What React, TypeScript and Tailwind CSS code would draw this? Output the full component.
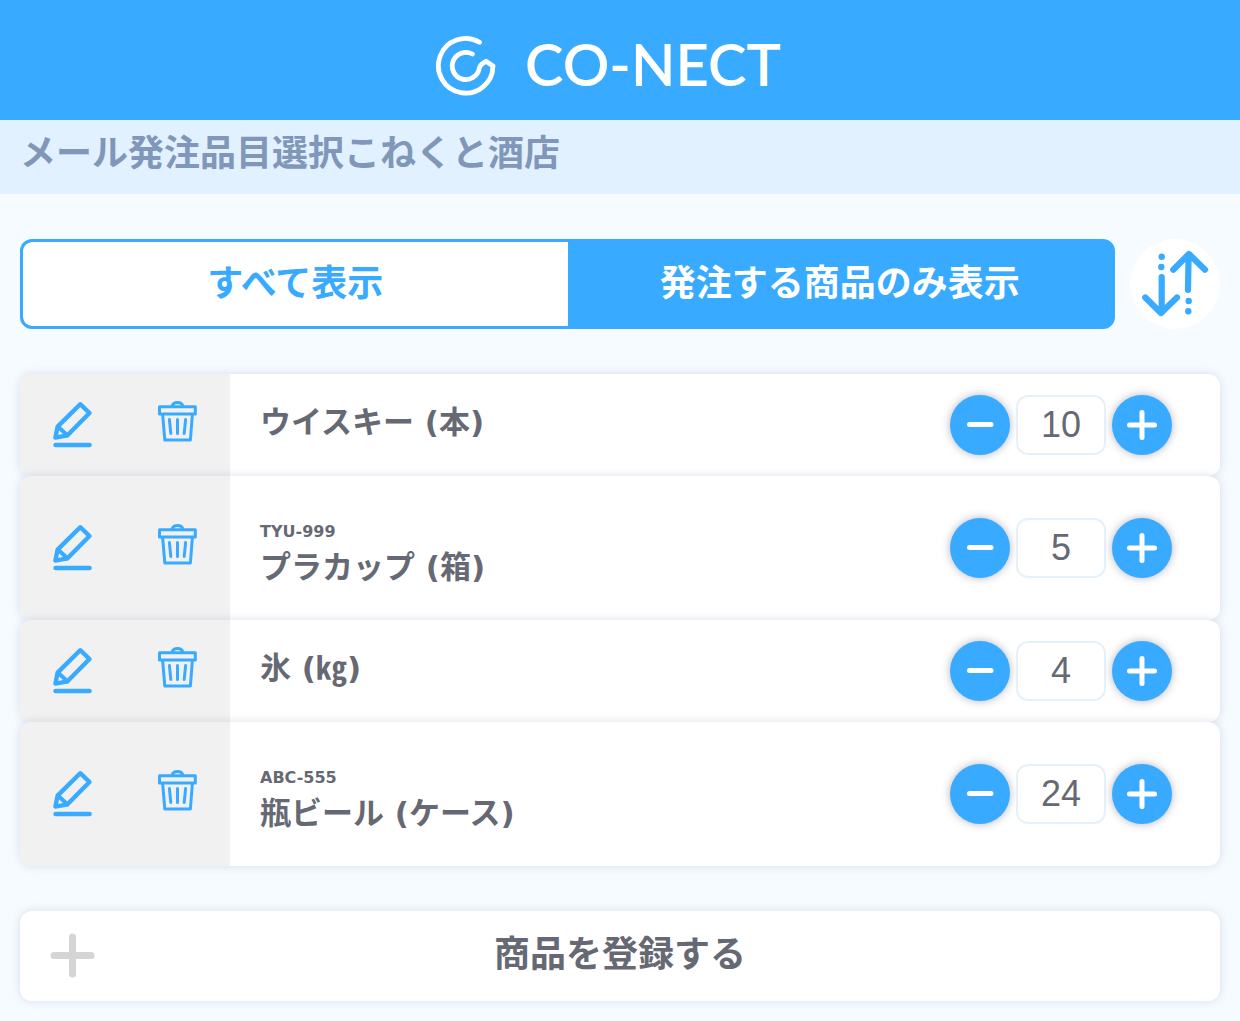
import { useState } from "react";

type Item = { id: number; code?: string; name: string; quantity: number };

const initialItems: Item[] = [
  { id: 1, name: "ウイスキー (本)", quantity: 10 },
  { id: 2, code: "TYU-999", name: "プラカップ (箱)", quantity: 5 },
  { id: 3, name: "氷 (㎏)", quantity: 4 },
  { id: 4, code: "ABC-555", name: "瓶ビール (ケース)", quantity: 24 },
];

function Logo() {
  return (
    <div className="flex items-center gap-7 pr-6 pt-3 text-white">
      <svg width="62" height="62" viewBox="0 0 62 62" fill="none" stroke="currentColor" strokeWidth="4.8" strokeLinecap="round" strokeLinejoin="round" aria-hidden="true">
        <path d="M44.5 7.2 A27.3 27.3 0 1 0 58 31 L51 26.3 L47 29 C45.5 30 45 31 44.3 33 A13.6 13.6 0 1 1 37.3 19" />
      </svg>
      <span className="pb-1 font-['Lato',sans-serif] text-[58px] leading-[60px] font-semibold">CO-NECT</span>
    </div>
  );
}

function SortIcon() {
  return (
    <svg width="90" height="90" viewBox="-1 0 90 90" fill="none" stroke="currentColor" strokeWidth="6.2" strokeLinecap="round" strokeLinejoin="round" aria-hidden="true">
      <path d="M42.3 30.7 L57.9 15 L74 30.7 M57.6 16 L57 51" />
      <path d="M14.3 58.5 L30 74 L46 58.5 M30.7 38 L30.7 73" />
      <g fill="currentColor" stroke="none">
        <circle cx="30.7" cy="17.7" r="3.2" />
        <circle cx="30.3" cy="28" r="3.2" />
        <circle cx="57.7" cy="62" r="3.2" />
        <circle cx="57.3" cy="72.3" r="3.2" />
      </g>
    </svg>
  );
}

function EditIcon() {
  return (
    <svg width="42" height="48" viewBox="0 0 42 48" fill="none" stroke="currentColor" strokeWidth="4.4" strokeLinecap="round" strokeLinejoin="round" aria-hidden="true">
      <path d="M28.2 3.2 L37.5 12 L15.5 34.3 L3.4 36.6 L5.6 25.6 Z" />
      <path d="M6.4 26 L15.3 34.3" strokeWidth="4" />
      <path d="M3.5 44 H37.6" />
    </svg>
  );
}

function TrashIcon() {
  return (
    <svg width="42" height="43" viewBox="0 0 42 43" fill="none" stroke="currentColor" strokeWidth="3" strokeLinejoin="round" aria-hidden="true">
      <path d="M15 7 A5.8 5 0 0 1 26 7" />
      <rect x="2.5" y="7.7" width="35.8" height="7.4" />
      <path d="M5.6 15 L7.8 41 H33.4 L35.4 15" />
      <path d="M12.4 20.6 L13.8 34.4 M20.5 20.6 V34.4 M28.6 20.6 L27.2 34.4" strokeLinecap="round" strokeWidth="3" />
    </svg>
  );
}

function MinusIcon() {
  return (
    <svg width="30" height="30" viewBox="0 0 30 30" stroke="currentColor" strokeWidth="5" strokeLinecap="round" aria-hidden="true">
      <path d="M4.5 14.5 H26" />
    </svg>
  );
}

function PlusIcon() {
  return (
    <svg width="30" height="30" viewBox="0 0 30 30" stroke="currentColor" strokeWidth="5" strokeLinecap="round" aria-hidden="true">
      <path d="M2.5 15 H27.5 M15 2.5 V27.5" />
    </svg>
  );
}

const roundButton =
  "flex size-[60px] items-center justify-center rounded-full bg-[#38aaff] text-white shadow-[0_0_8px_rgba(60,70,100,0.4)]";

function ItemRow({ item, onQuantity, onDelete }: { item: Item; onQuantity: (n: number) => void; onDelete: () => void }) {
  return (
    <li className={`relative flex overflow-hidden rounded-xl bg-white shadow-[0_0_10px_rgba(80,100,140,0.2)] ${item.code ? "min-h-36" : "min-h-[102px]"}`}>
      <div className="flex w-[210px] shrink-0 items-center bg-[#f1f1f1] text-[#38aaff]">
        <button type="button" aria-label={`${item.name} 編集`} className="flex flex-1 justify-center">
          <EditIcon />
        </button>
        <button type="button" aria-label={`${item.name} 削除`} onClick={onDelete} className="flex flex-1 justify-center pb-2.5">
          <TrashIcon />
        </button>
      </div>
      <div className="flex min-w-0 flex-1 flex-col justify-center pl-[30px] font-['DejaVu_Sans','Noto_Sans_CJK_JP',sans-serif]">
        {item.code && <p className="pt-6 text-base leading-5 font-bold">{item.code}</p>}
        <p className="pb-1.5 text-[31px] leading-[50px] font-bold">{item.name}</p>
      </div>
      <div className="flex items-center gap-1.5 pr-12">
        <button type="button" aria-label="減らす" className={roundButton} onClick={() => onQuantity(Math.max(0, item.quantity - 1))}>
          <MinusIcon />
        </button>
        <input
          type="text"
          inputMode="numeric"
          aria-label={`${item.name} 数量`}
          value={item.quantity}
          onChange={(e) => onQuantity(Number(e.target.value) || 0)}
          className="h-[60px] w-[90px] rounded-xl border-2 border-[#e5f1fa] bg-white text-center font-['Liberation_Sans',sans-serif] text-4xl outline-none"
        />
        <button type="button" aria-label="増やす" className={roundButton} onClick={() => onQuantity(item.quantity + 1)}>
          <PlusIcon />
        </button>
      </div>
    </li>
  );
}

export default function App() {
  const [items, setItems] = useState(initialItems);
  const [onlyOrdered, setOnlyOrdered] = useState(true);
  const visible = onlyOrdered ? items.filter((i) => i.quantity > 0) : items;

  return (
    <div className="min-h-screen bg-[#f6fbff] pb-5 font-['Noto_Sans_CJK_JP',sans-serif] text-[#666973]">
      <header className="flex h-[120px] items-center justify-center bg-[#38aaff]">
        <Logo />
      </header>
      <h1 className="bg-[#e2f1ff] px-5 pt-[3px] pb-[17px] text-4xl leading-[54px] font-bold text-[#8097b9]">
        メール発注品目選択こねくと酒店
      </h1>
      <main className="flex flex-col gap-[45px] px-5 pt-[45px]">
        <div className="flex gap-[15px]">
          <div className="flex h-[90px] flex-1 overflow-hidden rounded-xl border-[3px] border-[#38aaff] bg-[#38aaff] text-4xl font-bold">
            <button
              type="button"
              aria-pressed={!onlyOrdered}
              onClick={() => setOnlyOrdered(false)}
              className={`flex-1 pb-2 ${onlyOrdered ? "rounded-l-lg bg-white text-[#38aaff]" : "text-white"}`}
            >
              すべて表示
            </button>
            <button
              type="button"
              aria-pressed={onlyOrdered}
              onClick={() => setOnlyOrdered(true)}
              className={`flex-1 pb-2 ${onlyOrdered ? "text-white" : "rounded-r-lg bg-white text-[#38aaff]"}`}
            >
              発注する商品のみ表示
            </button>
          </div>
          <button type="button" aria-label="並び替え" className="size-[90px] shrink-0 rounded-full bg-white text-[#38aaff]">
            <SortIcon />
          </button>
        </div>
        <ul>
          {visible.map((item) => (
            <ItemRow
              key={item.id}
              item={item}
              onQuantity={(n) => setItems(items.map((i) => (i.id === item.id ? { ...i, quantity: n } : i)))}
              onDelete={() => setItems(items.filter((i) => i.id !== item.id))}
            />
          ))}
        </ul>
        <button
          type="button"
          className="grid h-[90px] grid-cols-[1fr_auto_1fr] items-center rounded-xl bg-white px-[30px] pb-0.5 text-4xl font-bold shadow-[0_0_10px_rgba(80,100,140,0.2)]"
        >
          <svg width="45" height="45" viewBox="0 0 45 45" stroke="#d5d5d5" strokeWidth="7" strokeLinecap="round" aria-hidden="true">
            <path d="M4 22.5 H41 M22.5 4 V41" />
          </svg>
          <span className="pb-2">商品を登録する</span>
        </button>
      </main>
    </div>
  );
}
